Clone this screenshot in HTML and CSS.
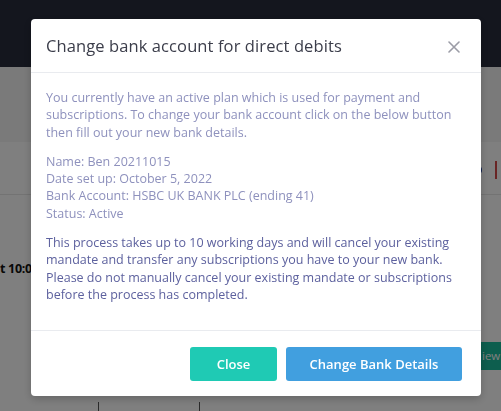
FILE: index.html
```html
<!DOCTYPE html>
<html lang="en">
<head>
<meta charset="utf-8">
<title>Change bank account</title>
<link rel="stylesheet" href="styles.css">
</head>
<body>
<div class="page">
  <div class="topbar"></div>
  <div class="subbar"></div>
  <div class="content">
    <div class="row-head">
      <span class="dot"></span><span class="bar"></span>
    </div>
    <div class="row-main">
      <span class="time">t 10:0</span>
    </div>
    <div class="row-action">
      <span class="view-btn">iew</span>
    </div>
    <div class="cols">
      <span class="col"></span><span class="col"></span>
    </div>
  </div>
</div>
<div class="overlay">
  <div class="modal">
    <div class="modal-header">
      <h2 class="modal-title">Change bank account for direct debits</h2>
      <span class="close-x" aria-label="Close">
        <svg width="12" height="12" viewBox="0 0 12 12"><path d="M1 1 L11 11 M11 1 L1 11" stroke="#9b9ca6" stroke-width="1.6" stroke-linecap="round"/></svg>
      </span>
    </div>
    <div class="modal-body">
      <p class="intro">You currently have an active plan which is used for payment and subscriptions. To change your bank account click on the below button then fill out your new bank details.</p>
      <p class="details">Name: Ben 20211015<br>Date set up: October 5, 2022<br>Bank Account: HSBC UK BANK PLC (ending 41)<br>Status: Active</p>
      <p class="notice">This process takes up to 10 working days and will cancel your existing mandate and transfer any subscriptions you have to your new bank. Please do not manually cancel your existing mandate or subscriptions before the process has completed.</p>
    </div>
    <div class="modal-footer">
      <button class="btn btn-close">Close</button>
      <button class="btn btn-change">Change Bank Details</button>
    </div>
  </div>
</div>
</body>
</html>
```
FILE: styles.css
```css
* { box-sizing: border-box; }
html, body { margin: 0; padding: 0; }
body {
  width: 501px;
  height: 411px;
  overflow: hidden;
  background: #ffffff;
  font-family: "Open Sans", "Liberation Sans", sans-serif;
}
.page { width: 501px; height: 411px; display: flex; flex-direction: column; }
.topbar { height: 67px; flex: none; background: #282c3c; }
.subbar { height: 75px; flex: none; background: #f4f4f4; }
.content { flex: 1; display: flex; flex-direction: column; }
.row-head { height: 53px; flex: none; border-bottom: 1px solid #e6e6e6; display: flex; align-items: center; justify-content: flex-end; gap: 13px; padding-right: 4px; padding-top: 3px; }
.dot { width: 4px; height: 8px; background: #1d3f9a; border-radius: 0 4px 4px 0; }
.bar { width: 2px; height: 18px; background: #d34a4a; }
.row-main { height: 147px; flex: none; display: flex; align-items: center; }
.time { font-weight: 700; font-size: 12.5px; color: #111; letter-spacing: -0.3px; }
.row-action { height: 28px; flex: none; display: flex; justify-content: flex-end; }
.view-btn { display: block; width: 20px; height: 28px; background: #1abc9c; color: #fff; font-size: 11.5px; line-height: 28px; padding-left: 1px; white-space: nowrap; }
.cols { flex: 1; display: flex; gap: 100px; padding-left: 98px; align-items: flex-end; }
.col { width: 1px; height: 9px; background: #555; }

.overlay {
  position: fixed; inset: 0;
  background: rgba(0,0,0,0.5);
  padding: 19px 0 0 31px;
}
.modal {
  width: 450px;
  height: 377px;
  background: #fff;
  border-radius: 4px;
  display: flex;
  flex-direction: column;
  box-shadow: 0 3px 8px rgba(0,0,0,0.2);
}
.modal-header {
  height: 54px;
  flex: none;
  border-bottom: 1px solid #e9ebef;
  display: flex;
  align-items: center;
  justify-content: space-between;
  padding: 0 21px 0 15px;
}
.modal-title {
  margin: 0;
  font-size: 16.5px;
  font-weight: 500;
  color: #3b3d4a;
  letter-spacing: 0.1px;
}
.close-x { display: flex; padding-top: 2px; }
.modal-body {
  flex: 1;
  padding: 16px 15px 0 15px;
  font-size: 12.5px;
  line-height: 17.3px;
}
.modal-body p { margin: 0 0 12px 0; }
.intro { color: #8e91bd; }
.details { color: #8e91bd; }
.notice { color: #5d619e; }
.modal-footer {
  height: 66px;
  flex: none;
  border-top: 1px solid #e9ebef;
  display: flex;
  justify-content: flex-end;
  align-items: center;
  gap: 9px;
  padding: 0 19px 0 0;
}
.btn {
  height: 34px;
  border: none;
  border-radius: 3px;
  color: #fff;
  font-family: "Open Sans", "Liberation Sans", sans-serif;
  font-size: 13px;
  font-weight: 600;
}
.btn-close { width: 87px; background: #1fcab4; }
.btn-change { width: 176px; background: #419fdf; }
```
